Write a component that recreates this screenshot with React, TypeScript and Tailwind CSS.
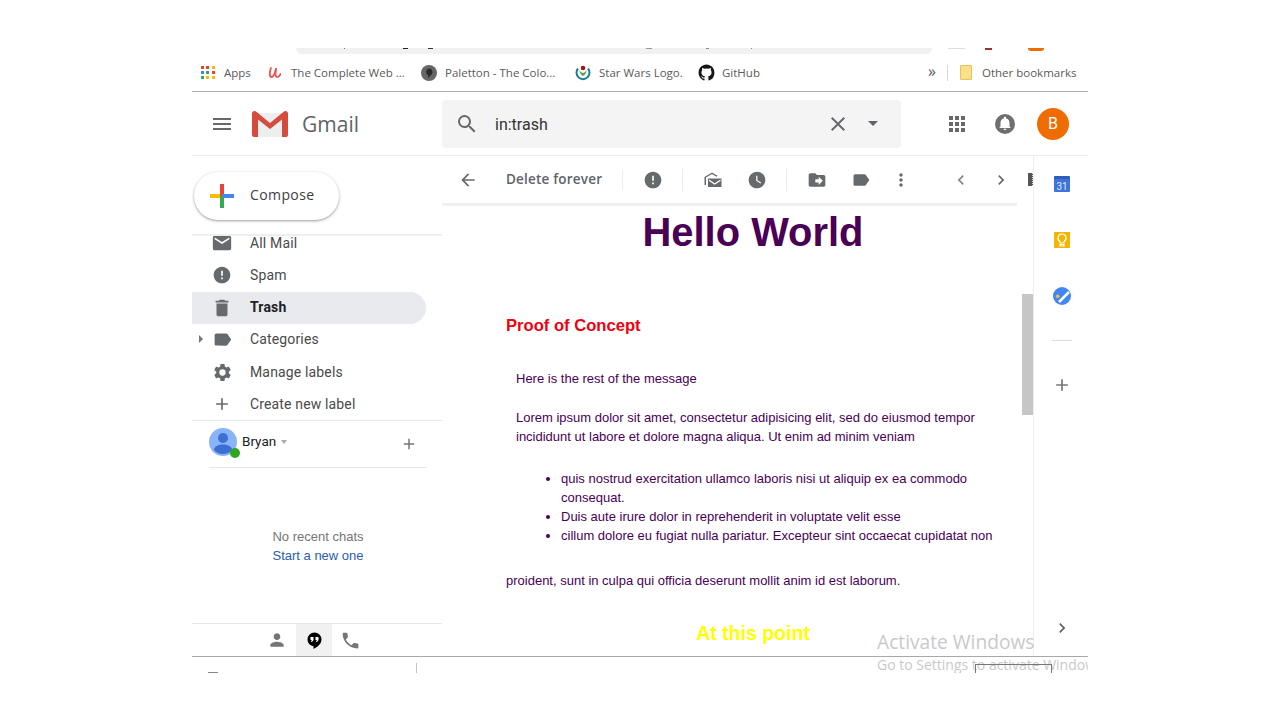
import type { ReactNode } from "react"

const ROBOTO = "font-['Roboto',sans-serif]"

function Ic({ d, size = 24, color = "#676a6d", className = "" }: { d: string; size?: number; color?: string; className?: string }) {
  return (
    <svg width={size} height={size} viewBox="0 0 24 24" fill={color} className={"shrink-0 " + className}>
      <path d={d} />
    </svg>
  )
}

const paths = {
  menu: "M3 18h18v-2H3v2zm0-5h18v-2H3v2zm0-7v2h18V6H3z",
  search: "M15.5 14h-.79l-.28-.27A6.47 6.47 0 0 0 16 9.5 6.5 6.5 0 1 0 9.5 16c1.61 0 3.09-.59 4.23-1.57l.27.28v.79l5 4.99L20.49 19l-4.99-5zm-6 0C7.01 14 5 11.99 5 9.5S7.01 5 9.5 5 14 7.01 14 9.5 11.99 14 9.5 14z",
  close: "M19 6.41 17.59 5 12 10.59 6.41 5 5 6.41 10.59 12 5 17.59 6.41 19 12 13.41 17.59 19 19 17.59 13.41 12z",
  apps: "M4 8h4V4H4v4zm6 12h4v-4h-4v4zm-6 0h4v-4H4v4zm0-6h4v-4H4v4zm6 0h4v-4h-4v4zm6-10v4h4V4h-4zm-6 4h4V4h-4v4zm6 6h4v-4h-4v4zm0 6h4v-4h-4v4z",
  back: "M20 11H7.83l5.59-5.59L12 4l-8 8 8 8 1.41-1.41L7.83 13H20v-2z",
  spam: "M12 2C6.48 2 2 6.48 2 12s4.48 10 10 10 10-4.48 10-10S17.52 2 12 2zm1 15h-2v-2h2v2zm0-4h-2V7h2v6z",
  mail: "M20 4H4c-1.1 0-2 .9-2 2v12c0 1.1.9 2 2 2h16c1.1 0 2-.9 2-2V6c0-1.1-.9-2-2-2zm0 4-8 5-8-5V6l8 5 8-5v2z",
  clock: "M12 2C6.5 2 2 6.5 2 12s4.5 10 10 10 10-4.5 10-10S17.5 2 12 2zm4.2 14.2L11 13V7h1.5v5.2l4.5 2.7-.8 1.3z",
  move: "M20 6h-8l-2-2H4c-1.1 0-2 .9-2 2v12c0 1.1.9 2 2 2h16c1.1 0 2-.9 2-2V8c0-1.1-.9-2-2-2zm-6 12v-3h-4v-4h4V8l5 5-5 5z",
  label: "M17.63 5.84C17.27 5.33 16.67 5 16 5L5 5.01C3.9 5.01 3 5.9 3 7v10c0 1.1.9 1.99 2 1.99L16 19c.67 0 1.27-.33 1.63-.84L22 12l-4.37-6.16z",
  dots: "M12 8c1.1 0 2-.9 2-2s-.9-2-2-2-2 .9-2 2 .9 2 2 2zm0 2c-1.1 0-2 .9-2 2s.9 2 2 2 2-.9 2-2-.9-2-2-2zm0 6c-1.1 0-2 .9-2 2s.9 2 2 2 2-.9 2-2-.9-2-2-2z",
  prev: "M15.41 7.41 14 6l-6 6 6 6 1.41-1.41L10.83 12z",
  next: "M10 6 8.59 7.41 13.17 12l-4.58 4.59L10 18l6-6z",
  trash: "M6 19c0 1.1.9 2 2 2h8c1.1 0 2-.9 2-2V7H6v12zM19 4h-3.5l-1-1h-5l-1 1H5v2h14V4z",
  gear: "M19.14 12.94c.04-.3.06-.61.06-.94 0-.32-.02-.64-.07-.94l2.03-1.58a.49.49 0 0 0 .12-.61l-1.92-3.32a.49.49 0 0 0-.59-.22l-2.39.96c-.5-.38-1.03-.7-1.62-.94l-.36-2.54a.48.48 0 0 0-.48-.41h-3.84c-.24 0-.43.17-.47.41l-.36 2.54c-.59.24-1.13.57-1.62.94l-2.39-.96c-.22-.08-.47 0-.59.22L2.74 8.87c-.12.21-.08.47.12.61l2.03 1.58c-.05.3-.09.63-.09.94s.02.64.07.94l-2.03 1.58a.49.49 0 0 0-.12.61l1.92 3.32c.12.22.37.29.59.22l2.39-.96c.5.38 1.03.7 1.62.94l.36 2.54c.05.24.24.41.48.41h3.84c.24 0 .44-.17.47-.41l.36-2.54c.59-.24 1.13-.56 1.62-.94l2.39.96c.22.08.47 0 .59-.22l1.92-3.32c.12-.22.07-.47-.12-.61l-2.01-1.58zM12 15.6A3.6 3.6 0 1 1 12 8.4a3.6 3.6 0 0 1 0 7.2z",
  plus: "M19 13h-6v6h-2v-6H5v-2h6V5h2v6h6v2z",
  person: "M12 12c2.21 0 4-1.79 4-4s-1.79-4-4-4-4 1.79-4 4 1.79 4 4 4zm0 2c-2.67 0-8 1.34-8 4v2h16v-2c0-2.66-5.33-4-8-4z",
  phone: "M6.62 10.79c1.44 2.83 3.76 5.14 6.59 6.59l2.2-2.2c.27-.27.67-.36 1.02-.24 1.12.37 2.33.57 3.57.57.55 0 1 .45 1 1V20c0 .55-.45 1-1 1-9.39 0-17-7.61-17-17 0-.55.45-1 1-1h3.5c.55 0 1 .45 1 1 0 1.25.2 2.45.57 3.57.11.35.03.74-.25 1.02l-2.2 2.2z",
  github: "M12 2C6.48 2 2 6.58 2 12.25c0 4.53 2.87 8.37 6.84 9.73.5.09.68-.22.68-.49 0-.24-.01-1.05-.01-1.9-2.78.62-3.37-1.21-3.37-1.21-.45-1.18-1.11-1.49-1.11-1.49-.91-.64.07-.62.07-.62 1 .07 1.53 1.05 1.53 1.05.89 1.57 2.34 1.12 2.91.85.09-.66.35-1.12.63-1.37-2.22-.26-4.56-1.14-4.56-5.06 0-1.12.39-2.03 1.03-2.75-.1-.26-.45-1.3.1-2.71 0 0 .84-.28 2.75 1.05a9.3 9.3 0 0 1 5 0c1.91-1.33 2.75-1.05 2.75-1.05.55 1.41.2 2.45.1 2.71.64.72 1.03 1.63 1.03 2.75 0 3.93-2.34 4.8-4.57 5.05.36.32.68.94.68 1.9 0 1.37-.01 2.47-.01 2.81 0 .27.18.59.69.49A10.16 10.16 0 0 0 22 12.25C22 6.58 17.52 2 12 2z",
}

function Bookmark({ icon, text, gap, width, className = "" }: { icon: ReactNode; text: string; gap: string; width: string; className?: string }) {
  return (
    <div className={"flex items-center shrink-0 " + gap + " " + className}>
      {icon}
      <span className={"text-[11.5px] text-[#5a5a5a] whitespace-nowrap " + width}>{text}</span>
    </div>
  )
}

function AddressStrip() {
  // only the bottom few pixels of the browser chrome are in the shot
  return (
    <div className="h-[6px] shrink-0 pl-[104px] flex items-start">
      <div className="relative w-[636px] h-full bg-[#f1f1f1] rounded-b-[10px]">
        <div className="absolute left-[48px] top-0 w-px h-[1px] bg-[#777]" />
        <div className="absolute left-[107px] top-0 w-[5px] h-px bg-[#222]" />
        <div className="absolute left-[132px] top-0 w-[5px] h-px bg-[#333]" />
        <div className="absolute left-[350px] top-0 w-[6px] h-px bg-[#999]" />
        <div className="absolute left-[410px] top-0 w-[3px] h-px bg-[#888]" />
        <div className="absolute left-[455px] top-0 w-px h-px bg-[#888]" />
      </div>
      <div className="ml-[16px] w-[17px] h-px bg-[#ddd]" />
      <div className="ml-[20px] w-[7px] h-[2px] bg-[#a03030]" />
      <div className="ml-[36px] w-[16px] h-[3px] bg-[#ef6c00] rounded-b-full" />
    </div>
  )
}

function BookmarksBar() {
  const dots = ["#ea4335", "#ea4335", "#fbbc05", "#4285f4", "#34a853", "#ea4335", "#34a853", "#fbbc05", "#fbbc05"]
  return (
    <div className="h-[38px] shrink-0 border-b border-[#ababab] flex items-center pl-[9px] font-['Open_Sans',sans-serif]">
      <Bookmark
        gap="gap-[9px]"
        width="w-[28px]"
        icon={
          <div className="grid grid-cols-3 gap-[2px] w-[14px]">
            {dots.map((c, i) => (
              <div key={i} className="w-[3px] h-[3px]" style={{ background: c }} />
            ))}
          </div>
        }
        text="Apps"
      />
      <Bookmark
        className="ml-[16px]"
        gap="gap-[10px]"
        width="w-[115px]"
        icon={
          <svg width="13" height="13" viewBox="0 0 13 13" fill="none" stroke="#ec5252" strokeWidth="1.800" strokeLinecap="round" className="shrink-0">
            <path d="M3 2C1 7 1.500 11 3.500 11S7 7 8 3" />
            <path d="M8 3C7 8 7.500 11.500 9.500 11S12 9 12.500 8" />
          </svg>
        }
        text="The Complete Web ..."
      />
      <Bookmark
        className="ml-[15px]"
        gap="gap-[8px]"
        width="w-[112px]"
        icon={
          <svg width="16" height="16" viewBox="0 0 16 16" className="shrink-0">
            <circle cx="8" cy="8" r="8" fill="#666" />
            <path d="M8 3.500a3.500 3.500 0 0 1 2.500 6L7 13l.2-3A3.400 3.400 0 0 1 8 3.500z" fill="#2a2a2a" />
          </svg>
        }
        text="Paletton - The Colo..."
      />
      <Bookmark
        className="ml-[18px]"
        gap="gap-[8px]"
        width="w-[84px]"
        icon={
          <svg width="16" height="16" viewBox="0 0 16 16" className="shrink-0">
            <path d="M3 3.500a6.500 6.500 0 1 0 10 0" fill="none" stroke="#1f7a99" strokeWidth="2" />
            <path d="M4.500 5c0 3 1.500 5 3.500 6 2-1 3.500-3 3.500-6-1 2-2.500 3-3.500 3S5.500 7 4.500 5z" fill="#4da34d" />
            <circle cx="8" cy="3" r="2.300" fill="#a01818" />
          </svg>
        }
        text="Star Wars Logo."
      />
      <Bookmark
        className="ml-[14px]"
        gap="gap-[6px]"
        width="w-[40px]"
        icon={<Ic d={paths.github} size={19} color="#161616" />}
        text="GitHub"
      />
      <span className="ml-[166px] w-[10px] text-[16px] leading-none text-[#555] -mt-[3px]">»</span>
      <div className="ml-[9px] w-px h-[16px] bg-[#d8d8d8]" />
      <Bookmark
        className="ml-[12px]"
        gap="gap-[10px]"
        width="w-[94px]"
        icon={<div className="w-[12px] h-[15px] bg-[#fbe08a] border border-[#e6c25a] rounded-[1px]" />}
        text="Other bookmarks"
      />
    </div>
  )
}

function GmailLogo() {
  return (
    <svg width="36" height="26" viewBox="0 0 36 26" className="shrink-0">
      <path d="M2 2h32v22a2 2 0 0 1-2 2H4a2 2 0 0 1-2-2z" fill="#eeeeee" />
      <path d="M0 2.500A2.500 2.500 0 0 1 4 0.500L18 12 32 0.500a2.500 2.500 0 0 1 4 2V24a2 2 0 0 1-2 2h-4V8.500L18 18 6 8.500V26H2a2 2 0 0 1-2-2z" fill="#d54b3d" />
    </svg>
  )
}

function Header() {
  return (
    <div className="h-[64px] shrink-0 border-b border-[#ececec] flex items-center">
      <Ic d={paths.menu} className="ml-[18px]" />
      <div className="ml-[18px]"><GmailLogo /></div>
      <span className="ml-[14px] w-[140px] text-[21px] leading-none text-[#5f6368] font-['Open_Sans',sans-serif] mt-[2px]">Gmail</span>
      <div className="w-[459px] h-[48px] rounded-[4px] bg-[#f4f4f4] flex items-center">
        <Ic d={paths.search} className="ml-[13px]" />
        <span className={"ml-[16px] w-[331px] text-[16px] text-[#333] mt-[2px] " + ROBOTO}>in:trash</span>
        <Ic d={paths.close} />
        <div className="ml-[18px] w-0 h-0 border-x-[5px] border-x-transparent border-t-[5px] border-t-[#5f6368]" />
      </div>
      <Ic d={paths.apps} className="ml-[44px]" />
      <svg width="24" height="24" viewBox="0 0 24 24" className="ml-[24px] shrink-0">
        <circle cx="12" cy="12" r="10" fill="#6f6f6f" />
        <path d="M12 18c.8 0 1.400-.6 1.400-1.300h-2.800c0 .7.600 1.300 1.400 1.300zm4.500-3.500V11c0-2.200-1.200-3.900-3.300-4.400V6a1.200 1.200 0 0 0-2.400 0v.6C8.700 7.100 7.500 8.800 7.500 11v3.500L6.500 15.500v.5h11v-.5z" fill="#fff" />
      </svg>
      <div className={"ml-[20px] w-[32px] h-[32px] rounded-full bg-[#ef6c00] text-white text-[16px] flex items-center justify-center " + ROBOTO}>B</div>
    </div>
  )
}

function NavRow({ icon, label, active, className = "" }: { icon: ReactNode; label: string; active?: boolean; className?: string }) {
  return (
    <div className={"relative h-[32px] w-[234px] flex items-center rounded-r-[16px] " + (active ? "bg-[#e8eaed] font-bold text-[#202124] " : "text-[#4a4a4a] ") + className}>
      <div className="w-[58px] flex justify-center pl-[2px]">{icon}</div>
      <span className={"text-[14px] tracking-[0.15px] " + (active ? "-mt-[2px]" : "")}>{label}</span>
    </div>
  )
}

function Sidebar() {
  return (
    <div className={"w-[250px] shrink-0 flex flex-col " + ROBOTO}>
      <div className="h-[80px] shrink-0 border-b-2 border-[#eceff1] pl-[2px] pt-[16px]">
        <div className="w-[145px] h-[48px] rounded-[24px] bg-white flex items-center shadow-[0_1px_3px_rgba(60,64,67,0.45),0_1px_1px_rgba(60,64,67,0.1)]">
          <svg width="24" height="24" viewBox="0 0 24 24" className="ml-[16px] shrink-0">
            <rect x="0" y="10" width="12" height="4" fill="#fbbc05" />
            <rect x="10" y="0" width="4" height="12" fill="#ea4335" />
            <rect x="12" y="10" width="12" height="4" fill="#4285f4" />
            <rect x="10" y="12" width="4" height="12" fill="#34a853" />
          </svg>
          <span className="ml-[16px] -mt-[3px] text-[14px] font-medium text-[#3c4043] tracking-[0.4px] font-['Open_Sans',sans-serif]">Compose</span>
        </div>
      </div>

      <div className="h-[185px] shrink-0 overflow-hidden border-b border-[#e8e8e8]">
        <div className="-mt-[9px]">
          <NavRow icon={<Ic d={paths.mail} size={22} />} label="All Mail" />
          <NavRow icon={<Ic d={paths.spam} size={20} />} label="Spam" />
          <NavRow active className="mt-px" icon={<Ic d={paths.trash} size={22} />} label="Trash" />
          <NavRow
            className="-mt-px"
            icon={
              <>
                <div className="absolute left-[7px] top-[12px] w-0 h-0 border-y-[4px] border-y-transparent border-l-[4px] border-l-[#777]" />
                <Ic d={paths.label} size={21} />
              </>
            }
            label="Categories"
          />
          <NavRow className="mt-px" icon={<Ic d={paths.gear} size={21} />} label="Manage labels" />
          <NavRow icon={<Ic d={paths.plus} size={20} />} label="Create new label" />
        </div>
      </div>

      <div className="mx-[17px] w-[217px] h-[47px] shrink-0 border-b border-[#e6e6e6] flex items-start pt-[7px]">
        <div className="relative w-[28px] h-[28px] rounded-full bg-[#8ab4f8] shrink-0">
          <svg width="28" height="28" viewBox="0 0 28 28">
            <circle cx="14" cy="10" r="5" fill="#3b6fd4" />
            <path d="M5 22c0-4 5-5.500 9-5.500s9 1.500 9 5.500c-2 2.500-5 4-9 4s-7-1.500-9-4z" fill="#3b6fd4" />
          </svg>
          <div className="absolute left-[21px] top-[20px] w-[10px] h-[10px] rounded-full bg-[#2ea51f]" />
        </div>
        <span className="ml-[5px] mt-[5px] text-[13.500px] leading-[16px] text-[#222]">Bryan</span>
        <div className="ml-[5px] mt-[12px] w-0 h-0 border-x-[3.500px] border-x-transparent border-t-[4px] border-t-[#aaa]" />
        <Ic d={paths.plus} size={18} color="#757575" className="ml-[113px] mt-[7px]" />
      </div>

      <div className="h-[156px] shrink-0 border-b border-[#e8e8e8] flex flex-col items-center pl-[2px] pt-[59px] text-[13px] leading-[19px] font-['Liberation_Sans',sans-serif]">
        <span className="text-[#757575]">No recent chats</span>
        <span className="text-[#2a5db0]">Start a new one</span>
      </div>

      <div className="h-[32px] flex items-center pl-[73px]">
        <div className="w-[24px] flex justify-center mr-[7px]"><Ic d={paths.person} size={20} color="#757575" /></div>
        <div className="w-[36px] h-full bg-[#f1f1f1] flex items-center justify-center">
          <svg width="15" height="17" viewBox="0 0 15 17">
            <path d="M7.500 0.500a7 7 0 0 0-7 7 6.800 6.800 0 0 0 6 6.800V17c3-1.500 8-4.500 8-9.500a7 7 0 0 0-7-7z" fill="#000" />
            <path d="M3.500 5h3v3l-1.500 2H4l.8-2H3.500zM8.500 5h3v3l-1.500 2H9l.8-2H8.500z" fill="#fff" />
          </svg>
        </div>
        <div className="w-[36px] flex justify-center pl-px"><Ic d={paths.phone} size={21} color="#757575" /></div>
      </div>
    </div>
  )
}

function Sep({ className = "" }: { className?: string }) {
  return <div className={"w-px h-[22px] bg-[#ececec] shrink-0 " + className} />
}

function Toolbar() {
  return (
    <div className="h-[47px] shrink-0 flex items-center overflow-hidden">
      <Ic d={paths.back} size={20} className="ml-[16px]" />
      <span className="ml-[28px] w-[96px] shrink-0 whitespace-nowrap text-[13.500px] font-semibold tracking-[0.2px] text-[#5f6368] font-['Open_Sans',sans-serif]">Delete forever</span>
      <Sep className="ml-[20px]" />
      <Ic d={paths.spam} size={20} className="ml-[20px]" />
      <Sep className="ml-[19px]" />
      <svg width="20" height="20" viewBox="0 0 20 20" className="ml-[20px] shrink-0" fill="#676a6d">
        <path d="M1.500 7 9 2.500 14.500 5.800 13.500 6.800 9 4 3 7.600V15H1.500z" />
        <path d="M5 8.500h13.500V17H5z" />
        <path d="M6 9.500l5.700 3.800 5.800-3.800v1.500l-5.800 3.800L6 11z" fill="#fff" />
      </svg>
      <Ic d={paths.clock} size={20} className="ml-[24px]" />
      <Sep className="ml-[19px]" />
      <Ic d={paths.move} size={20} className="ml-[20px]" />
      <Ic d={paths.label} size={20} className="ml-[24px]" />
      <Ic d={paths.dots} size={20} className="ml-[20px]" />
      <Ic d={paths.prev} size={20} color="#80868b" className="ml-[40px]" />
      <Ic d={paths.next} size={20} className="ml-[20px]" />
      <div className="ml-[17px] w-[5px] h-[13px] shrink-0 bg-[#555] border-r border-dotted border-[#ddd]" />
    </div>
  )
}

function Message() {
  return (
    <div className="flex-1 min-w-0 overflow-hidden pl-[64px] font-['Liberation_Sans',sans-serif] text-[13px] leading-[19px] text-[#4a0055]">
      <div className="w-[494px]">
        <h1 className="mt-[4px] text-center text-[39.900px] leading-[46px] font-bold text-[#4a0055]">Hello World</h1>
        <h3 className="mt-[61px] text-[16.600px] leading-[20px] font-bold text-[#ee0011]">Proof of Concept</h3>
        <div className="pl-[10px]">
          <p className="mt-[33px]">Here is the rest of the message</p>
          <p className="mt-[20px]">Lorem ipsum dolor sit amet, consectetur adipisicing elit, sed do eiusmod tempor incididunt ut labore et dolore magna aliqua. Ut enim ad minim veniam</p>
          <ul className="mt-[23px] pl-[45px] list-disc">
            <li>quis nostrud exercitation ullamco laboris nisi ut aliquip ex ea commodo consequat.</li>
            <li>Duis aute irure dolor in reprehenderit in voluptate velit esse</li>
            <li>cillum dolore eu fugiat nulla pariatur. Excepteur sint occaecat cupidatat non</li>
          </ul>
        </div>
        <p className="mt-[26px]">proident, sunt in culpa qui officia deserunt mollit anim id est laborum.</p>
        <h2 className="mt-[32px] text-center text-[19.500px] leading-[23px] font-bold text-[#ffff00]">At this point</h2>
      </div>
    </div>
  )
}

function RightPanel() {
  return (
    <div className="w-[55px] shrink-0 border-l border-[#eeeeee] flex flex-col items-center pl-[2px]">
      <div className={"mt-[20px] w-[16px] h-[16px] bg-[#3f73dc] text-[#dfe8fb] text-[10px] leading-none flex items-end justify-center border-t-[3px] border-[#2f5cb8] rounded-[1px] " + ROBOTO}>31</div>
      <div className="mt-[40px] w-[16px] h-[16px] bg-[#f4b400] flex items-center justify-center">
        <svg width="12" height="14" viewBox="0 0 12 14">
          <path d="M6 1a4 4 0 0 0-2 7.500V10h4V8.500A4 4 0 0 0 6 1zM4 11.500h4V13H4z" fill="none" stroke="#fff" strokeWidth="1.200" />
        </svg>
      </div>
      <svg width="18" height="18" viewBox="0 0 18 18" className="mt-[39px] shrink-0">
        <circle cx="9" cy="9" r="9" fill="#4285f4" />
        <path d="M6 15 16 5" stroke="#fff" strokeWidth="2.500" />
        <circle cx="4.700" cy="9.300" r="1.800" fill="#fbc02d" />
      </svg>
      <div className="mt-[35px] w-[20px] h-px bg-[#dadce0]" />
      <Ic d={paths.plus} size={20} color="#757575" className="mt-[34px]" />
      <Ic d={paths.next} size={20} color="#5f6368" className="mt-[223px]" />
    </div>
  )
}

export default function App() {
  return (
    <div className="min-h-screen bg-white flex justify-center pt-[48px]">
      <div className="relative w-[896px] h-[625px] overflow-hidden flex flex-col bg-white">
        <AddressStrip />
        <BookmarksBar />
        <Header />

        <div className="h-[500px] shrink-0 flex">
          <Sidebar />
          <div className="w-[591px] shrink-0 flex flex-col">
            <Toolbar />
            <div className="w-[575px] h-[2px] shrink-0 bg-[#eeeeee] shadow-[0_1px_1px_rgba(0,0,0,0.05)]" />
            <div className="flex-1 min-h-0 flex">
              <Message />
              <div className="w-[11px] shrink-0 pt-[89px]">
                <div className="w-[11px] h-[121px] bg-[#c6c6c6]" />
              </div>
            </div>
          </div>
          <RightPanel />
        </div>

        <div className="flex-1 border-t border-[#a8a8a8] relative">
          <div className="absolute left-[16px] top-[15px] w-[10px] h-px bg-[#888]" />
          <div className="absolute left-[224px] top-[6px] w-px h-[10px] bg-[#c4c4c4]" />
        </div>

        {/* windows watermark sits on top of everything */}
        <div className="absolute left-[685px] top-[582px] text-[#c9c9c9] font-['Open_Sans',sans-serif] whitespace-nowrap pointer-events-none">
          <div className="text-[19.200px] leading-[24px]">Activate Windows</div>
          <div className="text-[14px] leading-[19px] mt-[1px]">Go to Settings to activate Windows</div>
        </div>
        <div className="absolute left-[783px] top-[616px] w-[77px] h-[9px] border-t border-x border-[#777]" />
      </div>
    </div>
  )
}
